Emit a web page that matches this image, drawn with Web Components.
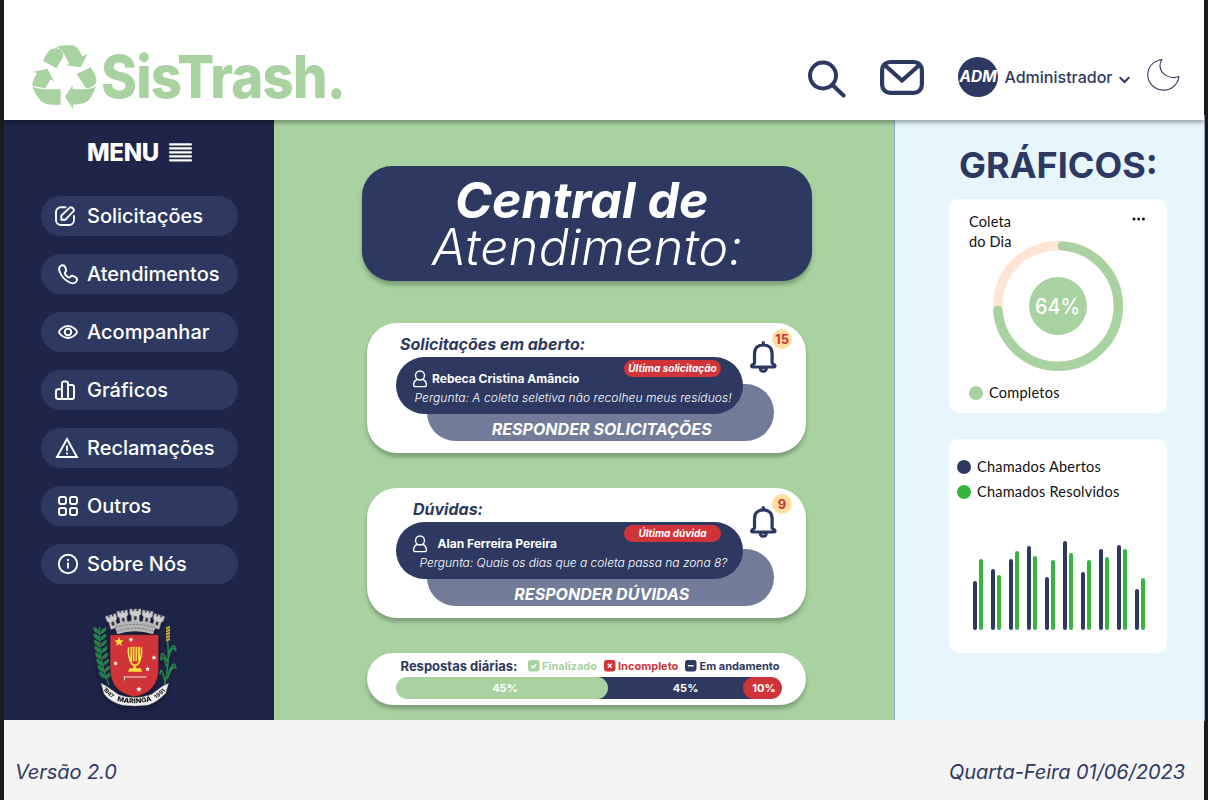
<!DOCTYPE html>
<html lang="pt-BR">
<head>
<meta charset="utf-8">
<title>SisTrash</title>
<style>
html,body{margin:0;height:100%}
body{background:#1c1c1c;font-family:Inter,"Liberation Sans",sans-serif;color:#2d3960;overflow:hidden}
</style>
</head>
<body>
<sis-app></sis-app>
<script>
const define=(name,css,html)=>customElements.define(name,class extends HTMLElement{
  constructor(){
    super();
    const t=document.createElement('template');
    const markup=typeof html==='function'?html(this):html;
    t.innerHTML=`<style>*{box-sizing:border-box}svg{display:block}${css}</style>${markup}`;
    this.attachShadow({mode:'open'}).append(t.content.cloneNode(true));
  }
});

const icons={
  edit:'<path d="M14.500 11.200H10a5 5 0 0 0-5 5V24a5 5 0 0 0 5 5h8a5 5 0 0 0 5-5v-4"/><path d="M10.300 19.600 18.800 11.600c1.500-1.400 5.200 2 3.800 3.600L14.200 23.800H10.300z"/>',
  phone:'<path d="M10.300 11.500c-2.200 1-2.700 3.600-1.500 6.500 2.100 5.100 5 8.200 10 10.500 3 1.400 5.800.700 6.900-1.600.700-1.600.300-2.700-1-3.500l-1.900-1.200c-1.300-.8-2.500-.500-3.600.600-1 1-1.900.800-3-.300l-1.500-1.500c-1.100-1.100-1.200-2-.300-3 .900-1 1-2.100.400-3.400l-.700-1.600c-.700-1.600-2.100-2.200-3.800-1.500z"/>',
  eye:'<path d="M8 20c0-1 3.300-6 9-6s9 5 9 6-3.300 6-9 6-9-5-9-6z"/><circle cx="17" cy="20" r="3.300"/>',
  chart:'<path d="M11 29V13.500a2 2 0 0 1 2-2h2a2 2 0 0 1 2 2V29M11 19.200H7a2 2 0 0 0-2 2V27a2 2 0 0 0 2 2h14a2 2 0 0 0 2-2V17a2 2 0 0 0-2-2h-4"/>',
  alert:'<path stroke-linejoin="miter" d="M16 11 6 29h20z"/><path stroke-linecap="butt" d="M16 17.500v5.500M16 24.500v2"/>',
  grid:'<rect x="8" y="11" width="7" height="7" rx="2"/><rect x="19" y="11" width="7" height="7" rx="2"/><rect x="8" y="22" width="7" height="7" rx="2"/><rect x="19" y="22" width="7" height="7" rx="2"/>',
  info:'<circle cx="17" cy="20" r="9.200"/><path stroke-linecap="butt" d="M17 18.500v6M17 15v2"/>'
};

define('sis-logo',`:host{display:flex;width:314px;height:68px;align-items:flex-start}
svg{flex:none}
.word{font:800 59px/68px Inter,sans-serif;color:#a8d3a0;white-space:nowrap;margin:0 0 0 3px;letter-spacing:-.9px;transform:scaleX(.925);transform-origin:0 0}`,
`<svg width="67" height="68" viewBox="93 39 201 204" fill="#a8d3a0">
<path d="M130 93Q139 65 154 57Q181 49 190 72L189 82 169 115z"/>
<path d="M167 51Q190 44 217 46Q230 48 239 64L247 79 262 73 242 112 197 106 208 102 191 70Q184 56 167 51z"/>
<path d="M230 132 272 112Q294 145 288 158Q281 173 258 175z"/>
<path d="M100 125 142 116 162 153 151 149 136 174Q104 171 97 166Q96 154 111 130z"/>
<path d="M97 168Q108 177 138 178H182V224H154Q132 222 123 213Q103 191 97 168z"/>
<path d="M195 200 218 165V178H246Q279 178 288 168Q283 186 267 210Q258 222 219 224V237z"/>
</svg><span class="word">SisTrash.</span>`);

define('sis-user',`:host{display:flex;align-items:center;gap:6.500px;font:500 16px/24px Inter,sans-serif}
.avatar{width:40px;height:40px;border-radius:50%;background:#2d3960;color:#fff;font:italic 700 15.500px/40px Inter,sans-serif;text-align:center}
.name{width:107.500px;white-space:nowrap}
svg{margin-top:5px}`,
`<span class="avatar">ADM</span><span class="name"><slot></slot></span>
<svg width="11" height="8" fill="none" stroke="#2d3960" stroke-width="2" stroke-linecap="round"><path d="M1.300 1.800 5.500 6 9.700 1.800"/></svg>`);

define('sis-header',`:host{display:flex;height:120px;background:#fff;box-shadow:0 3px 4px rgba(0,0,0,.3);padding:0 24px 0 27px;position:relative;z-index:2;align-items:flex-start}
sis-logo{margin-top:43px}
.actions{margin-left:auto;display:flex;align-items:center;margin-top:57px;height:40px}
.search{margin-right:33px}.mail{margin-right:34px}sis-user{margin-right:17.500px}.moon{margin-top:-4px}`,
`<sis-logo></sis-logo><div class="actions">
<svg class="search" width="40" height="41" fill="none" stroke="#2d3960" stroke-width="4" stroke-linecap="round"><circle cx="16" cy="18.500" r="13"/><path d="M25.500 28 36.500 38.500"/></svg>
<svg class="mail" width="44" height="36" fill="none" stroke="#2d3960" stroke-width="4.200"><rect x="2.100" y="3" width="39.800" height="30.800" rx="8"/><path d="M4 5.500 22 21.500 40 5.500"/></svg>
<sis-user>Administrador</sis-user>
<svg class="moon" width="33" height="34" fill="none" stroke="#2d3960" stroke-width="1.100" stroke-linejoin="round"><path d="M15 1.500C6 3 .8 9 .8 16.500c0 9 7 15.600 15.700 15.600 8.200 0 14.200-5.500 15.500-13.600-8.500 3.300-19-2-19-11 0-2.300.8-4.300 2-6z"/></svg>
</div>`);

define('menu-item',`:host{display:flex;align-items:center;width:197px;height:40px;border-radius:20px;background:#2d3960;padding-left:10px;color:#fff}
svg{flex:none;fill:none;stroke:#fff;stroke-width:1.900;stroke-linecap:round;stroke-linejoin:round}
span{font:500 20px/40px Inter,sans-serif;white-space:nowrap;letter-spacing:0}`,
el=>`<svg width="36" height="40">${icons[el.getAttribute('icon')]}</svg><span><slot></slot></span>`);

const star=(x,y,r,f)=>{let p='';for(let i=0;i<10;i++){const a=Math.PI*i/5-Math.PI/2,q=i%2?r*.42:r;p+=`${(x+q*Math.cos(a)).toFixed(1)},${(y+q*Math.sin(a)).toFixed(1)} `}return `<polygon points="${p}" fill="${f}"/>`};
let leaves='';
for(let i=0;i<8;i++){const y=102+i*19,x=59+i*i*.35;leaves+=`<path d="M${x} ${y}q-19-4-18-20q17 3 18 20M${x+1} ${y}q19-5 18-19q-16 4-18 19"/>`}
let grain='';
for(let i=0;i<5;i++)grain+=`<ellipse cx="${261}" cy="${84+i*9}" rx="3" ry="4.500"/><ellipse cx="${267}" cy="${82+i*9}" rx="3" ry="4.500"/>`;
let merlons='';
[[81,44,32,-16],[113,32,32,-8],[149,27,34,0],[185,32,32,8],[217,44,32,16]].forEach(([x,y,w,a])=>{merlons+=`<g transform="rotate(${a} ${x+w/2} ${y+20})"><path d="M${x} ${y}h8v6h${w/2-12}v-6h8v6h${w/2-12}v-6h8v15l-5 5v22h-${w-10}v-22l-5-5z"/><path d="M${x+w/2-4} ${y+22}h8v11h-8z" fill="#333"/></g>`});

define('city-crest',`:host{display:block;filter:drop-shadow(0 3px 3px rgba(0,0,0,.3))}`,
`<svg width="110" height="115" viewBox="0 0 330 345">
<g fill="#23834a" stroke="#23834a" stroke-width="2">${leaves}</g><path d="M59 82Q55 185 88 255" fill="none" stroke="#23834a" stroke-width="4"/>
<g fill="#b3283a"><circle cx="62" cy="132" r="3"/><circle cx="64" cy="173" r="3"/><circle cx="76" cy="210" r="3"/></g>
<path d="M263 124Q270 190 253 257M264 164Q283 118 288 153Q276 130 264 177M262 185Q243 139 243 181Q252 158 259 200M264 222Q284 174 287 204Q276 194 262 236M255 244Q242 190 240 224" fill="none" stroke="#23834a" stroke-width="5"/><g fill="#c6b13c">${grain}</g>
<g fill="#ccc" stroke="#777" stroke-width="1.500">${merlons}</g>
<path d="M102 74Q165 52 230 74L219 103Q165 84 112 103z" fill="#b4b4b4"/><path d="M104 84Q165 62 227 84M108 95Q165 74 222 95" fill="none" stroke="#777" stroke-width="2.500" stroke-dasharray="8 3"/>
<path d="M90 104H236V205Q236 277 163 291Q90 277 90 205z" fill="#d03438" stroke="#2b1b2b" stroke-width="2"/>
${star(117,126,15,'#ffe23c')}${star(153,119,8,'#fff')}${star(107,190,8,'#fff')}${star(222,173,8,'#fff')}${star(203,207,8,'#fff')}${star(177,268,9,'#fff')}
<g fill="none" stroke="#ffe23c" stroke-width="5"><path d="M146 142Q143 157 150 180Q155 195 163 196H168Q177 192 181 177Q187 158 184 142M154 140V184M161 140V184M169 140V184M177 140V181"/><path d="M164 194V208" stroke-width="8"/></g><path d="M149 205H182L187 215H144z" fill="#ffe23c"/>
<path d="M132 231H199M133 229V241" stroke="#eee" stroke-width="3"/>
<path d="M63 249L82 260 116 284Q165 302 215 283L247 259 266 250 257 280Q231 307 205 315Q165 321 125 315Q91 306 72 282z" fill="#eee" stroke="#777" stroke-width="1"/>
<path id="r" d="M108 302Q164 318 222 300" fill="none"/><path id="l" d="M68 265Q84 289 109 301" fill="none"/><path id="q" d="M222 300Q247 286 262 263" fill="none"/>
<g fill="#151515" font-family="Inter,sans-serif" font-weight="800"><text font-size="20"><textPath href="#r" textLength="106" startOffset="3" lengthAdjust="spacingAndGlyphs">MARINGÁ</textPath></text><text font-size="16"><textPath href="#l" textLength="38" startOffset="3">1947</textPath></text><text font-size="16"><textPath href="#q" textLength="38" startOffset="6">1951</textPath></text></g>
</svg>`);

define('sis-sidebar',`:host{display:flex;flex-direction:column;background:#1f2549;color:#fff;width:270px;padding-left:37px}
.head{display:flex;align-items:center;gap:10px;padding-left:46px;height:24px;margin:20px 0 32px}
.head span{font:800 24px/24px Inter,sans-serif;letter-spacing:-.3px;width:72px;white-space:nowrap;padding-top:1px}
nav{display:flex;flex-direction:column;gap:18px}
city-crest{margin:16px 0 0 39px}`,
`<div class="head"><span>MENU</span><svg width="23" height="19" fill="#fff"><rect y=".2" width="23" height="2.300" rx="1"/><rect y="4.200" width="23" height="2.300" rx="1"/><rect y="8.200" width="23" height="2.300" rx="1"/><rect y="12.200" width="23" height="2.300" rx="1"/><rect y="16.200" width="23" height="2.300" rx="1"/></svg></div>
<nav><menu-item icon="edit">Solicitações</menu-item><menu-item icon="phone">Atendimentos</menu-item><menu-item icon="eye">Acompanhar</menu-item><menu-item icon="chart">Gráficos</menu-item><menu-item icon="alert">Reclamações</menu-item><menu-item icon="grid">Outros</menu-item><menu-item icon="info">Sobre Nós</menu-item></nav><city-crest></city-crest>`);

define('title-banner',`:host{display:block;width:450px;height:115px;border-radius:30px;background:#2d3960;color:#fff;box-shadow:0 4px 4px rgba(0,0,0,.25);padding-top:11px;text-align:center;font:italic 700 50px/47px Inter,sans-serif}
.a{padding-right:9.500px;letter-spacing:.05px}.b{font-weight:300;padding-left:2px;letter-spacing:.35px}`,
`<div class="a"><slot name="strong"></slot></div><div class="b"><slot></slot></div>`);

define('notify-bell',`:host{display:block;position:absolute;right:14px;top:6px;width:43px;height:46px}
svg{margin-top:11px}
span{position:absolute;right:0;top:0;width:20px;height:20px;border-radius:50%;background:#ffdfa0;color:#d03438;font:700 13px/20px Inter,sans-serif;text-align:center}`,
`<svg width="28" height="34" fill="none" stroke="#2d3960" stroke-width="3.200" stroke-linecap="round" stroke-linejoin="round"><path d="M14.300 2.500v2M5.500 23V13.500C5.500 8 9 4.800 14.300 4.800s8.800 3.200 8.800 8.700V23l2.500 2.300c.8.900.3 1.700-.8 1.700H3.800c-1.100 0-1.600-.8-.8-1.700z"/><path d="M11 28c0 4.500 6.600 4.500 6.600 0z" stroke-width="2.600"/></svg><span><slot></slot></span>`);

define('request-card',`:host{display:block;position:relative;width:439px;height:130px;border-radius:30px;background:#fff;box-shadow:0 4px 4px rgba(0,0,0,.25);white-space:nowrap}
h2{margin:0;height:34px;padding:9px 0 0 var(--hx);font:italic 700 16px/24px Inter,sans-serif;letter-spacing:var(--hs,0)}
.top{position:relative;z-index:1;width:347.400px;height:57.300px;margin-left:29px;border-radius:28.500px;background:#2d3960;color:#fff;padding:3px 22.400px 0 16px}
.tag{margin-left:auto;width:97px;height:17px;border-radius:9px;background:#d03438;font:italic 700 10px/17px Inter,sans-serif;text-align:center}
.who{display:flex;height:18px;margin-top:-7px;align-items:center}
.who b{font:700 12px/18px Inter,sans-serif;margin-left:var(--nx)}
p{margin:1px 0 0 var(--px);font:italic 300 12px/18px Inter,sans-serif;letter-spacing:var(--ps,0)}
.reply{width:347.400px;height:57.300px;margin:-30.300px 0 0 60px;border-radius:28.500px;background:#727c99;color:#fff;padding:33px 0 0 2px;text-align:center;font:italic 700 16px/24px Inter,sans-serif;letter-spacing:.05px}`,
`<h2><slot name="title"></slot></h2><div class="top"><div class="tag"><slot name="tag"></slot></div><div class="who"><svg width="16" height="18" fill="none" stroke="#fff" stroke-width="1.400"><circle cx="8" cy="5.500" r="4.500"/><path d="M5 9.500C3 10.500 1.600 12.600 1.600 14.700c0 1.300.6 1.900 2 1.900h8.800c1.400 0 2-.6 2-1.900 0-2.100-1.400-4.200-3.400-5.200"/></svg><b><slot name="name"></slot></b></div><p><slot></slot></p></div>
<div class="reply"><slot name="reply"></slot></div><notify-bell><slot name="count"></slot></notify-bell>`);

define('legend-tag',`:host{display:flex;align-items:center;gap:var(--g,2.500px);color:var(--c);font:700 11px/16px Inter,sans-serif;white-space:nowrap}span{margin-top:-1px}svg{margin-top:-1px}`,
el=>`<svg width="11.500" height="11.500" viewBox="0 0 12 12"><rect width="12" height="12" rx="2.500" fill="var(--c)"/><path fill="none" stroke="#fff" stroke-width="1.500" d="${el.getAttribute('mark')}"/></svg><span><slot></slot></span>`);

define('daily-status',`:host{display:block;width:439px;height:52px;border-radius:26px;background:#fff;box-shadow:0 4px 4px rgba(0,0,0,.25);padding:5px 24px 0 29px}
.head{display:flex;align-items:center;height:17px;margin-bottom:2px;padding-left:4.500px}
h3{margin:0;font:700 13px/17px Inter,sans-serif;width:127.500px;white-space:nowrap}
.bar{display:flex;width:386px;height:22px;border-radius:11px;background:linear-gradient(90deg,transparent 50px,#2d3960 50px 365px,transparent 365px);color:#fff;font:700 11px/22px Inter,sans-serif;text-align:center}
.bar div{border-radius:11px}
.f{width:212px;background:#a8d3a0;padding-left:6px}.e{width:135px;padding-left:20px}.i{width:39px;background:#d03438;padding-left:3px}`,
`<div class="head"><h3>Respostas diárias:</h3><legend-tag mark="M3.500 6 5.500 8 8.700 4.500" style="--c:#a8d3a0;width:76px">Finalizado</legend-tag><legend-tag mark="M4 4 8 8M8 4 4 8" style="--c:#d03438;width:81px">Incompleto</legend-tag><legend-tag mark="M3 6H9" style="--c:#2d3960;--g:3px">Em andamento</legend-tag></div>
<div class="bar"><div class="f">45%</div><div class="e">45%</div><div class="i">10%</div></div>`);

define('sis-main',`:host{display:flex;flex-direction:column;align-items:center;background:#a8d3a0;padding:46px 0 0 5px;flex:1}
title-banner{margin-bottom:42px}request-card{margin-bottom:35px}`,
`<title-banner><span slot="strong">Central de</span>Atendimento:</title-banner>
<request-card style="--hx:33px;--nx:4px;--px:2.500px;--ps:.06px"><span slot="title">Solicitações em aberto:</span><span slot="tag">Última solicitação</span><span slot="name">Rebeca Cristina Amâncio</span>Pergunta: A coleta seletiva não recolheu meus resíduos!<span slot="reply">RESPONDER SOLICITAÇÕES</span><span slot="count">15</span></request-card>
<request-card style="--hx:46px;--nx:9.500px;--px:7.500px;--ps:-.02px"><span slot="title">Dúvidas:</span><span slot="tag">Última dúvida</span><span slot="name">Alan Ferreira Pereira</span>Pergunta: Quais os dias que a coleta passa na zona 8?<span slot="reply">RESPONDER DÚVIDAS</span><span slot="count">9</span></request-card>
<daily-status></daily-status>`);

define('dot-label',`:host{display:flex;align-items:center;gap:6px;height:20px;color:#111;font:400 14.500px/20px Lato,Inter,sans-serif;white-space:nowrap}
i{width:14px;height:14px;border-radius:50%;background:var(--c)}`,`<i></i><span><slot></slot></span>`);

define('collect-card',`:host{display:flex;flex-direction:column;width:218px;height:214px;border-radius:10px;background:#fff;padding:14px 20px 0;color:#111;font:400 14.500px/20px Lato,Inter,sans-serif}
.head{display:flex;justify-content:space-between;height:28px;letter-spacing:.15px}
.head span{margin-top:-1px}
.head svg{margin:4px 1px 0 0}
.ring{margin:0 auto}
dot-label{margin-top:9px;letter-spacing:.25px}`,
`<div class="head"><span>Coleta<br>do Dia</span><svg width="14" height="4" fill="#111"><circle cx="2" cy="2" r="1.500"/><circle cx="6.700" cy="2" r="1.500"/><circle cx="11.400" cy="2" r="1.500"/></svg></div>
<svg class="ring" width="132" height="133" viewBox="-66 -65 132 133"><g fill="none" stroke-width="9.400"><circle r="60.300" stroke="#ffe5d4"/><path d="M4.500-60.100A60.300 60.300 0 1 1-60.100 4.500" stroke="#a8d3a0" stroke-linecap="round"/></g><circle r="29" fill="#a8d3a0"/><text x="-.5" y="8" text-anchor="middle" fill="#fff" font-family="Inter,sans-serif" font-size="21" font-weight="500" textLength="45" lengthAdjust="spacingAndGlyphs">64%</text></svg>
<dot-label style="--c:#a8d3a0">Completos</dot-label>`);

const open=[49,61.500,71.500,84.500,53.500,89.500,58.500,81.500,85,41.500],done=[71,55,79.500,74,70.500,77.500,70,73.500,81,52.500];
define('calls-card',`:host{display:flex;flex-direction:column;width:218px;height:214px;border-radius:10px;background:#fff;padding:18px 8px 0}
dot-label{margin-bottom:5px;letter-spacing:.22px}
.bars{display:flex;align-items:flex-end;gap:8.500px;height:92px;margin:31px 0 0 16px}
.pair{display:flex;align-items:flex-end;gap:2.500px;width:9.500px}
.pair i{width:3.500px;border-radius:2px;background:#2d3960}.pair i+i{background:#36b53c}`,
`<dot-label style="--c:#2d3960">Chamados Abertos</dot-label><dot-label style="--c:#36b53c">Chamados Resolvidos</dot-label><div class="bars">${open.map((v,i)=>`<div class="pair"><i style="height:${v}px"></i><i style="height:${done[i]}px"></i></div>`).join('')}</div>`);

define('sis-charts',`:host{display:block;width:311px;margin:-5px -1px -1px 0;padding:32px 0 0 54px;background:#e7f6fc;border:1px solid #8ea9cb;border-width:0 1px}
h2{margin:0 0 16px 10px;font:700 36px/36px Inter,sans-serif;white-space:nowrap}
collect-card{margin-bottom:26px}`,
`<h2>GRÁFICOS:</h2><collect-card></collect-card><calls-card></calls-card>`);

define('sis-footer',`:host{display:flex;justify-content:space-between;height:80px;background:#f4f4f4;padding:40px 19px 0 11px;position:relative;font:italic 400 20px/24px Inter,sans-serif;letter-spacing:-.05px}`,
`<span>Versão 2.0</span><span>Quarta-Feira 01/06/2023</span>`);

define('sis-app',`:host{display:flex;flex-direction:column;width:1200px;height:800px;margin-left:4px}
.body{display:flex;height:600px}`,
`<sis-header></sis-header><div class="body"><sis-sidebar></sis-sidebar><sis-main></sis-main><sis-charts></sis-charts></div><sis-footer></sis-footer>`);
</script>
</body>
</html>
